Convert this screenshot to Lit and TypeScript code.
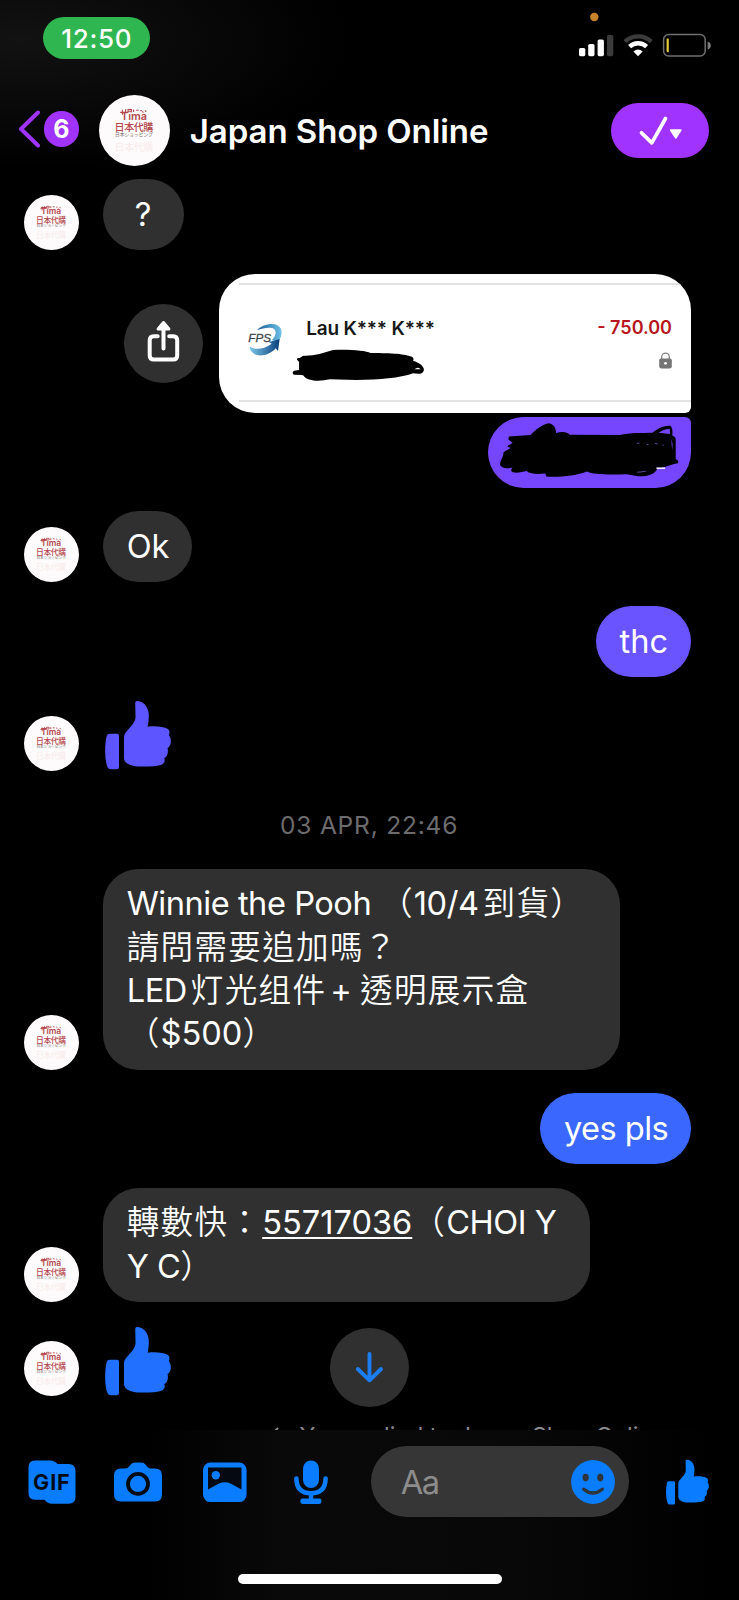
import { LitElement, html, css } from "lit";
import { customElement, property } from "lit/decorators.js";

@customElement("shop-avatar")
class ShopAvatar extends LitElement {
  static styles = css`
    :host { display: block; width: 55px; height: 55px; flex: none; }
    svg { display: block; width: 100%; height: 100%; }
    text { font-family: "Noto Sans CJK JP", sans-serif; }
    .brand { font-family: Inter, sans-serif; font-weight: 600; }
  `;
  render() {
    return html`<svg viewBox="0 0 71 71">
      <circle cx="35.5" cy="35.5" r="35.5" fill="#fdfbfb"></circle>
      <text class="brand" x="22" y="24.6" font-size="11" fill="#b5474d" textLength="26" lengthAdjust="spacingAndGlyphs">Tıma</text>
      <path d="M21.2 17.4h8M23.4 14.8v5M26.6 14.2v3M29 14.6h3.4v2.2H29zM34.6 14.4v2.6M37.2 15.2h2.4M41.4 15.6h1.4M43.4 16.4l1 1.2M46.2 15.4l1 1.6" stroke="#b5474d" stroke-width="1.1" fill="none"></path>
      <text x="15.6" y="36" font-size="10" font-weight="500" fill="#b5474d" textLength="38.6">日本代購</text>
      <text x="16" y="41.4" font-size="4.9" fill="#77686c" textLength="38" lengthAdjust="spacingAndGlyphs">日本ショッピング</text>
      <text x="15.6" y="56" font-size="10" fill="#e9a9ab" opacity=".2" textLength="38.6">日本代購</text>
    </svg>`;
  }
}

@customElement("thumb-up")
class ThumbUp extends LitElement {
  @property() color = "#0a7cff";
  static styles = css`
    :host { display: block; width: 67px; height: 70px; }
    svg { display: block; width: 100%; height: 100%; }
  `;
  render() {
    return html`<svg viewBox="0 0 202 212" fill=${this.color}>
      <path d="M14 102H36Q42 102 42 108V203Q42 210 35 210H17Q10 210 7 203Q0 185 0 155Q0 125 5 108Q7 102 14 102Z"></path>
      <path d="M91 9Q91 2 99 3C117 5 130 20 132 42C133 55 131 68 129 81C152 78 178 81 190 88C196 92 196 99 193 107C200 115 201 131 196 138Q194 143 189 145C192 158 189 171 179 176C183 186 178 194 168 197C145 203 90 204 75 196C63 192 57 185 57 175V116C57 100 65 96 72 87C82 76 92 65 92 50Z"></path>
    </svg>`;
  }
}

@customElement("status-bar")
class StatusBar extends LitElement {
  static styles = css`
    :host { display: flex; justify-content: space-between; align-items: flex-start; height: 94.5px; padding: 0 28px 0 43.3px; box-sizing: border-box; }
    .clock { margin-top: 17px; width: 107px; height: 42px; border-radius: 21px; background: #30b650; color: #fff; font: 500 26px/43px Inter, sans-serif; text-align: center; letter-spacing: .7px; }
    svg { display: block; }
  `;
  render() {
    return html`<div class="clock">12:50</div>
      <svg width="134" height="60" viewBox="577 0 134 60">
        <circle cx="594.3" cy="17" r="4.2" fill="#c8832b"></circle>
        <g fill="#fff">
          <rect x="579" y="48" width="6.3" height="8.2" rx="1.6"></rect>
          <rect x="588.2" y="44" width="6.3" height="12.2" rx="1.6"></rect>
          <rect x="597.6" y="39.5" width="6.3" height="16.7" rx="1.6"></rect>
        </g>
        <rect x="607" y="35" width="6.3" height="21.2" rx="1.6" fill="#3b3b3b"></rect>
        <path d="M624.9 41.6A19.5 19.5 0 0 1 651.3 41.6" fill="none" stroke="#3b3b3b" stroke-width="4.3"></path>
        <path d="M629.6 46.6A12.5 12.5 0 0 1 646.6 46.6" fill="none" stroke="#fff" stroke-width="4.3"></path>
        <path d="M638 56.2L633.4 51.6Q638 47.5 642.7 51.6Z" fill="#fff"></path>
        <rect x="663.6" y="34.6" width="41.6" height="21.4" rx="5" fill="none" stroke="#6f6f6f" stroke-width="1.5"></rect>
        <rect x="666.6" y="38.6" width="2.2" height="13.6" rx="1" fill="#e6cb3a"></rect>
        <path d="M707.6 41.5Q710.8 42.5 710.8 45.5Q710.8 48.5 707.6 49.6Z" fill="#7b7b7b"></path>
      </svg>`;
  }
}

@customElement("chat-header")
class ChatHeader extends LitElement {
  static styles = css`
    :host { display: flex; align-items: center; height: 71.5px; padding: 0 30px 0 18px; }
    .back { flex: none; margin-top: -3px; }
    .count { flex: none; margin: -3px 0 0 3.7px; width: 35.5px; height: 35.5px; border-radius: 50%; background: #a033ff; color: #fff; font: 700 25px/36px Inter, sans-serif; text-align: center; }
    shop-avatar { width: 71px; height: 71px; margin-left: 19.6px; }
    .title { flex: 1; margin: 2px 0 0 19.9px; color: #fff; font: 600 33px/40px Inter, sans-serif; white-space: nowrap; letter-spacing: -.05px; }
    .done { flex: none; width: 98.5px; height: 55px; border-radius: 27.5px; background: #a033ff; }
    svg { display: block; }
  `;
  render() {
    return html`
      <svg class="back" width="22" height="40" viewBox="18 109 22 40"><path d="M38 112.5L21 129L38 145.5" fill="none" stroke="#a033ff" stroke-width="4" stroke-linecap="round" stroke-linejoin="round"></path></svg>
      <div class="count">6</div>
      <shop-avatar></shop-avatar>
      <div class="title">Japan Shop Online</div>
      <div class="done"><svg width="98.5" height="55" viewBox="610.5 102.5 98.5 55">
        <path d="M641 132.3L651.3 142.3L665 118" fill="none" stroke="#fff" stroke-width="3.7" stroke-linecap="round" stroke-linejoin="round"></path>
        <path d="M670 129.5H680.5L675.3 137.5Z" fill="#fff" stroke="#fff" stroke-width="1.4" stroke-linejoin="round"></path>
      </svg></div>`;
  }
}

@customElement("transfer-card")
class TransferCard extends LitElement {
  static styles = css`
    :host { display: block; width: 472px; height: 139px; box-sizing: border-box; padding: 9px 0 11px 20px; background: #fff; border-radius: 36px 36px 6px 36px; overflow: hidden; font-family: Inter, sans-serif; }
    .row { display: flex; height: 119px; box-sizing: border-box; border-top: 2px solid #e2e2e2; border-bottom: 2px solid #e2e2e2; padding: 0 19px 0 7.5px; }
    .logo { margin-top: 38px; flex: none; }
    .mid { flex: 1; padding: 32px 0 0 9px; }
    .name { padding-left: 14.8px; color: #161616; font-size: 19px; font-weight: 600; line-height: 23px; letter-spacing: -.2px; }
    .end { display: flex; flex-direction: column; align-items: flex-end; padding-top: 31px; }
    .amount { color: #b6151c; font-size: 18px; font-weight: 600; line-height: 23px; letter-spacing: 0; white-space: nowrap; }
    svg { display: block; }
    .ink { margin-top: 8.5px; }
    .lock { margin: 13px 0 0 0; }
    .fps { font: italic 400 34px "Liberation Sans", sans-serif; }
  `;
  render() {
    return html`<div class="row">
      <svg class="logo" width="36" height="34" viewBox="440 188 108 102">
        <defs>
          <linearGradient id="a" x1="0" x2="1"><stop offset="0" stop-color="#1a5f91"></stop><stop offset="1" stop-color="#6fc0e8"></stop></linearGradient>
          <linearGradient id="b" x1="0" x2="1"><stop offset="0" stop-color="#7cc4e8"></stop><stop offset="1" stop-color="#093f7c"></stop></linearGradient>
        </defs>
        <path d="M470 210C490 188 530 184 541 204C548 220 540 238 531 242L514 240C530 224 530 206 514 203C498 201 484 206 470 210Z" fill="url(#a)"></path>
        <path d="M448 258C460 270 490 268 514 250L506 245L538 236L533 272L526 264C510 284 480 290 463 282C453 276 448 268 448 258Z" fill="url(#b)"></path>
        <text class="fps" x="444" y="245" textLength="68" lengthAdjust="spacingAndGlyphs" fill="#3c444b" stroke="#3c444b" stroke-width=".8">FPS</text>
      </svg>
      <div class="mid">
        <div class="name">Lau K*** K***</div>
        <svg class="ink" width="133.5" height="35" viewBox="577 265 400 105">
          <path d="M592 300Q590 294 600 295L610 288C640 290 670 280 700 271C740 268 800 272 812 280C860 280 915 282 930 290Q945 292 940 303C960 310 975 320 972 333C968 344 955 343 940 341C900 355 840 361 770 361L690 359C660 366 625 366 607 346L582 345Q575 338 583 333L598 331L598 307Z"></path>
          <path d="M944 329Q955 320 963 329ZM605 349Q612 354 618 356L610 347Z" fill="#fff"></path>
        </svg>
      </div>
      <div class="end">
        <div class="amount">- 750.00</div>
        <svg class="lock" width="13" height="17" viewBox="0 0 13 17"><path d="M2.7 8V5A3.8 3.8 0 0 1 10.3 5V8" fill="none" stroke="#838383" stroke-width="1.3"></path><rect x=".2" y="6.5" width="12.6" height="9.9" rx="1.8" fill="#757575"></rect><circle cx="6.5" cy="11.3" r="1.4" fill="#fff"></circle></svg>
      </div>
    </div>`;
  }
}

@customElement("chat-thread")
class ChatThread extends LitElement {
  static styles = css`
    :host { display: flex; flex-direction: column; gap: 23.7px; padding: 13.4px 48px 0 23.7px; box-sizing: border-box; color: #fff; font: 400 32.6px/43.4px Inter, "Noto Sans CJK TC", sans-serif; }
    .in { display: flex; align-items: flex-end; gap: 24px; flex: none; }
    .out { display: flex; flex-direction: column; align-items: flex-end; gap: 3.6px; flex: none; }
    .bubble { box-sizing: border-box; padding: 13.7px 24px; border-radius: 35.5px; background: #303030; white-space: nowrap; min-height: 70.9px; }
    .q { width: 81px; text-align: center; }
    .ok { width: 89.5px; }
    .thc { width: 95.5px; background: #6a54ff; }
    .yes { width: 151px; background: #3a68ff; letter-spacing: -.55px; }
    .wide { width: 517px; }
    .pay { width: 487.5px; }
    .line { height: 43.4px; white-space: pre; }
    .tight { letter-spacing: -.47px; }
    .cjk { letter-spacing: 1.3px; font-family: "Noto Sans CJK TC", sans-serif; font-weight: 350; line-height: 0; }
    .gap { margin-left: 4px; }
    .num { text-decoration: underline; text-decoration-thickness: 2px; text-underline-offset: 3px; }
    .share { display: flex; align-items: center; gap: 16px; }
    .circle { display: block; width: 79px; height: 79px; border-radius: 50%; background: #303030; }
    .masked { width: 203px; height: 71px; box-sizing: border-box; padding: 5px 0 0 10.5px; border-radius: 35.5px 6px 35.5px 35.5px; background: #7646ff; }
    .masked svg { display: block; }
    .like { min-height: 70.2px; }
    .like thumb-up { margin-left: 2.4px; align-self: flex-start; }
    .date { flex: none; height: 50.6px; box-sizing: border-box; padding-top: 15px; line-height: 32px; font-size: 24.5px; color: #6c6c6e; text-align: center; margin-left: 23.5px; letter-spacing: .8px; }
    .note { flex: none; display: flex; margin: 1.4px 0 0 250.3px; height: 30px; line-height: 30px; font-size: 23.3px; color: #8a8a8d; white-space: nowrap; }
    .note svg { width: 25.5px; height: 30px; display: block; }
  `;
  render() {
    return html`
      <div class="in"><shop-avatar></shop-avatar><div class="bubble q">?</div></div>
      <div class="out">
        <div class="share">
          <svg class="circle" viewBox="124.3 304 79 79" fill="none" stroke="#fff" stroke-width="4" stroke-linecap="round" stroke-linejoin="round">
            <path d="M158 336.3H154Q150 336.3 150 340.3V355.5Q150 359.5 154 359.5H173.5Q177.5 359.5 177.5 355.5V340.3Q177.5 336.3 173.5 336.3H169.5M163.8 348.5V330"></path>
            <path d="M163.8 322.5L169.2 329H158.4Z" fill="#fff" stroke-width="3"></path>
          </svg>
          <transfer-card></transfer-card>
        </div>
        <div class="masked"><svg width="181" height="56" viewBox="205 483 546 168">
          <path d="M235 526L300 522C315 505 340 488 355 486C372 488 378 505 377 516C395 510 412 512 418 521L570 522C600 514 640 516 668 515C690 498 705 494 722 494C730 500 728 515 728 524Q738 526 738 535L738 595Q750 598 744 607L733 609L705 618L682 624C675 640 650 648 625 646L590 640C540 642 490 642 470 632C440 645 380 650 348 647L345 638C320 640 300 640 288 630C275 632 255 640 243 632Q240 625 246 620C230 625 210 622 208 610C210 595 220 585 218 575C225 568 235 565 240 560L232 558Q228 552 240 550L246 545L233 535Z"></path>
          <path d="M686 515C700 506 712 502 720 504L721 519ZM725 533Q731 550 728 566Q725 552 725 533Z" fill="#7646ff"></path>
          <path d="M621 547l8-1M650 551l6-1M675 547l9 2M698 553l4-1M622 634q16-1 26-3" stroke="#6f57b8" stroke-width="2.5" fill="none"></path>
          <path d="M680 622h26" stroke="#f0ebff" stroke-width="5"></path>
        </svg></div>
      </div>
      <div class="in"><shop-avatar></shop-avatar><div class="bubble ok">Ok</div></div>
      <div class="out"><div class="bubble thc">thc</div></div>
      <div class="in like"><shop-avatar></shop-avatar><thumb-up color="#5d55ff"></thumb-up></div>
      <div class="date">03 APR, 22:46</div>
      <div class="in"><shop-avatar></shop-avatar><div class="bubble wide">
        <div class="line tight">Winnie the Pooh <span class="cjk">（</span>10/4<span class="cjk gap">到貨）</span></div>
        <div class="line"><span class="cjk">請問需要追加嗎？</span></div>
        <div class="line tight">LED<span class="cjk gap">灯光组件</span><span class="gap">+ </span><span class="cjk">透明展示盒</span></div>
        <div class="line"><span class="cjk">（</span>$500<span class="cjk">）</span></div>
      </div></div>
      <div class="out"><div class="bubble yes">yes pls</div></div>
      <div class="in"><shop-avatar></shop-avatar><div class="bubble pay">
        <div class="line"><span class="cjk">轉數快：</span><span class="num">55717036</span><span class="cjk">（</span><span class="tight">CHOI Y</span></div>
        <div class="line tight">Y C<span class="cjk">）</span></div>
      </div></div>
      <div class="in like"><shop-avatar></shop-avatar><thumb-up color="#2270ff"></thumb-up></div>
      <div class="note"><svg viewBox="0 0 25.5 30"><path d="M4 7L-1 12L4 17M0 12H12Q17 12 17 18" fill="none" stroke="#8a8a8d" stroke-width="2"></path></svg><span>You replied to Japan Shop Online</span></div>`;
  }
}

@customElement("chat-composer")
class ChatComposer extends LitElement {
  static styles = css`
    :host { display: block; box-sizing: border-box; padding: 16px 30px 0 8.3px; background: linear-gradient(90deg, #000 20%, #090909 38%, #080808 70%, #000 96%); }
    .bar { display: flex; align-items: center; height: 71px; }
    .slot { flex: none; width: 86.5px; display: flex; justify-content: center; }
    .field { flex: none; box-sizing: border-box; display: flex; align-items: center; justify-content: space-between; width: 258px; height: 71px; margin-left: 16.4px; padding: 0 13.5px 0 30px; border-radius: 35.5px; background: #363636; color: #8c8c8c; font: 400 32.6px/40px Inter, sans-serif; letter-spacing: -1.3px; }
    thumb-up { width: 43.5px; height: 46px; margin-left: auto; }
    .home { width: 264px; height: 10px; border-radius: 5px; background: #fff; margin: 57px auto 0 229.7px; }
    svg { display: block; }
    .gif { font: 700 21.5px Inter, sans-serif; }
  `;
  render() {
    return html`<div class="bar">
      <div class="slot"><svg width="48" height="44" viewBox="27.5 1459.5 48 44">
        <path d="M34.5 1460H50Q54 1460 57 1463.5H68Q75 1463.5 75 1470.5V1496.5Q75 1503.3 68 1503.3H51.5Q47 1503.3 44 1499.3H34.5Q28 1499.3 28 1492.5V1467Q28 1460 34.5 1460Z" fill="#0a7cff"></path>
        <text class="gif" x="32.6" y="1489.4" textLength="36.6" lengthAdjust="spacing" fill="#030b16">GIF</text>
      </svg></div>
      <div class="slot"><svg width="48" height="44" viewBox="114 1459.5 48 44">
        <path d="M121 1468H125Q128 1468 130 1465L131 1463.8Q132.3 1462 135 1462H141Q144 1462 145.5 1464L147 1466Q148.3 1468 151 1468H155Q162 1468 162 1475V1494Q162 1501 155 1501H121Q114 1501 114 1494V1475Q114 1468 121 1468Z" fill="#0a7cff"></path>
        <circle cx="138" cy="1483.4" r="10" fill="#0a7cff" stroke="#020a14" stroke-width="3.8"></circle>
      </svg></div>
      <div class="slot"><svg width="44" height="44" viewBox="203 1459.5 44 44">
        <rect x="203" y="1462" width="43.6" height="39.6" rx="7.5" fill="#0a7cff"></rect>
        <path d="M208 1467H241.5V1489L231 1483.2Q225 1480.3 218.5 1483.2L208 1489Z" fill="#050a12"></path>
        <circle cx="215.8" cy="1474.7" r="4.2" fill="#0a7cff"></circle>
      </svg></div>
      <div class="slot"><svg width="36" height="44" viewBox="293.5 1459.5 36 44">
        <rect x="303.5" y="1460" width="16" height="27.5" rx="8" fill="#0a7cff"></rect>
        <path d="M296.9 1478Q297 1492.7 311.5 1492.7Q326 1492.7 326.1 1478" fill="none" stroke="#0a7cff" stroke-width="4.6" stroke-linecap="round"></path>
        <path d="M309.3 1493H313.7V1498H320Q322 1498 322 1500.8Q322 1503.4 320 1503.4H303Q300.8 1503.4 300.8 1500.8Q300.8 1498 303 1498H309.3Z" fill="#0a7cff"></path>
      </svg></div>
      <div class="field"><span>Aa</span><svg width="44" height="44" viewBox="0 0 44 44">
        <circle cx="22" cy="22" r="21.9" fill="#0a7cff"></circle>
        <ellipse cx="14.6" cy="17.6" rx="3.1" ry="3.8" fill="#2f3439"></ellipse><ellipse cx="29.3" cy="17.6" rx="3.1" ry="3.8" fill="#2f3439"></ellipse>
        <path d="M12.7 29.2Q22 36.8 31.3 29.2" fill="none" stroke="#2f3439" stroke-width="3.4" stroke-linecap="round"></path>
      </svg></div>
      <thumb-up></thumb-up>
    </div>
    <div class="home"></div>`;
  }
}

@customElement("app-root")
class AppRoot extends LitElement {
  static styles = css`
    :host { display: flex; flex-direction: column; position: relative; width: 739px; height: 1600px; overflow: hidden; background: radial-gradient(ellipse 330px 130px at 20px 40px, #121212, #000) #000; }
    status-bar, chat-header { flex: none; }
    chat-thread { flex: 1; min-height: 0; overflow: hidden; }
    chat-composer { flex: none; height: 170px; }
    .jump { position: absolute; left: 330px; top: 1328px; width: 79px; height: 79px; border-radius: 50%; background: #303030; }
  `;
  render() {
    return html`
      <status-bar></status-bar>
      <chat-header></chat-header>
      <chat-thread></chat-thread>
      <chat-composer></chat-composer>
      <svg class="jump" viewBox="330.5 1328 79 79"><path d="M370 1354V1380M358.3 1369L370 1380.3L381.5 1369" fill="none" stroke="#1c7df0" stroke-width="3.9" stroke-linecap="round" stroke-linejoin="round"></path></svg>`;
  }
}
